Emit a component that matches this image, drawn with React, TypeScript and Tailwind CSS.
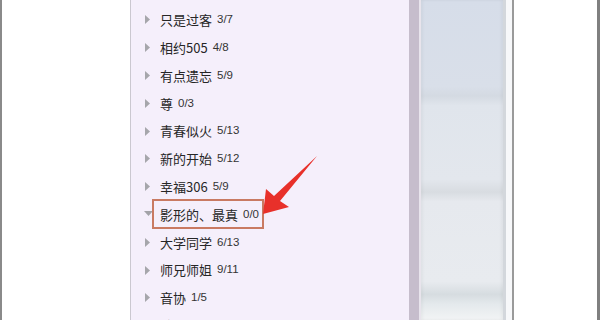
import React from "react";

const rows: { name: string; count: string; open?: boolean }[] = [
  { name: "只是过客", count: "3/7" },
  { name: "相约505", count: "4/8" },
  { name: "有点遗忘", count: "5/9" },
  { name: "尊", count: "0/3" },
  { name: "青春似火", count: "5/13" },
  { name: "新的开始", count: "5/12" },
  { name: "幸福306", count: "5/9" },
  { name: "影形的、最真", count: "0/0", open: true },
  { name: "大学同学", count: "6/13" },
  { name: "师兄师姐", count: "9/11" },
  { name: "音协", count: "1/5" },
  { name: "驴友俱乐部", count: "1/4" },
];

function Row({ name, count, open }: { name: string; count: string; open?: boolean }) {
  return (
    <div className="flex h-[27.8px] items-center pl-[14px]">
      {open ? (
        <svg width="9" height="6" viewBox="0 0 9 6" className="ml-[-1px] mr-[-3px]">
          <polygon points="0,0 9,0 4.5,5" fill="#a3a3a8" />
        </svg>
      ) : (
        <svg width="5" height="9" viewBox="0 0 5 9">
          <polygon points="0,0 5,4.5 0,9" fill="#a6a6ab" />
        </svg>
      )}
      {open ? (
        <span className="ml-[2px] flex h-[30px] items-center border-2 border-[#c97a62] pl-[6px] pr-[3px]">
          <span className="text-[13px] text-[#262626]">{name}</span>
          <span className="ml-[5px] text-[11.5px] text-[#333] [font-family:'Liberation_Sans',Arial,sans-serif]">{count}</span>
        </span>
      ) : (
        <span className="ml-[10px] flex items-center">
          <span className="text-[13px] text-[#262626]">{name}</span>
          <span className="ml-[5px] text-[11.5px] text-[#333] [font-family:'Liberation_Sans',Arial,sans-serif]">{count}</span>
        </span>
      )}
    </div>
  );
}

export default function App() {
  return (
    <div className="flex h-[320px] w-[600px] overflow-hidden bg-white [font-family:'Noto_Sans_CJK_SC','Liberation_Sans',sans-serif]">
      <div className="w-[2px] bg-[#8a8a8a]" />
      <div className="w-[128px] bg-white" />
      <div className="w-[1px] bg-[#cbc8d0]" />
      <div className="relative w-[278px] bg-[#f5effb] pt-[6px]">
        {rows.map((r) => (
          <Row key={r.name} {...r} />
        ))}
        <svg className="absolute left-0 top-0" width="278" height="320" viewBox="131 0 278 320">
          <polygon
            points="317,156 280,201 289,207 263,214 266,189 274,196"
            fill="#e8302a"
          />
        </svg>
      </div>
      <div className="w-[10px] bg-[#c6bdcc]" />
      <div className="w-[2px] bg-[#e8e4ec]" />
      <div className="w-[82px] bg-[linear-gradient(to_bottom,#d6dde9_0%,#d9dfe9_27%,#d4dae2_30%,#e0e5ec_33%,#e3e7ed_56%,#d8dce1_60%,#e6e9ee_63%,#e8ebef_88%,#d6dce0_92%,#e4e9ec_95%,#f2f4f5_100%)] shadow-[inset_2px_0_3px_rgba(0,0,0,0.04),inset_-2px_0_3px_rgba(0,0,0,0.04)]" />
      <div className="w-[3px] bg-[#d3d7dc]" />
      <div className="w-[6px] bg-[#f7f8fa]" />
      <div className="w-[2px] bg-[#9a9a9a]" />
      <div className="w-[83px] bg-white" />
      <div className="w-[3px] bg-[#808080]" />
    </div>
  );
}
